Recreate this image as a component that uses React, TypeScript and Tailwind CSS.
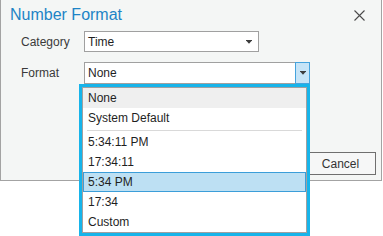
import { useState } from 'react';

const items = ['None', 'System Default', '-', '5:34:11 PM', '17:34:11', '5:34 PM', '17:34', 'Custom'];

const Arrow = () => (
    <svg width="6" height="4" viewBox="0 0 6 4" className="shrink-0">
        <rect x="0" y="0" width="6" height="1" fill="#3c3c3c" />
        <polygon points="0.5,1 5.5,1 3,3.8" fill="#3c3c3c" />
    </svg>
);

const App = () => {
    const [selected] = useState('5:34 PM');

    return (
        <div
            className="relative w-[383px] h-[236px] bg-white text-[12px] text-[#333]"
            style={{ fontFamily: '"Liberation Sans", Arial, sans-serif' }}
        >
            <div className="flex flex-col w-[382px] h-[181px] bg-[#f4f6f5] border-l border-r border-b border-[#a3a3a3]">
                {/* title bar */}
                <div className="flex items-start justify-between h-[31px]">
                    <div className="pl-[9px] pt-[5px] text-[16px] leading-[20px] text-[#1d84c6]">Number Format</div>
                    <svg width="11" height="11" viewBox="0 0 11 11" className="mt-[10px] mr-[16px]">
                        <path d="M0.5 0.5 L10.5 10.5 M10.5 0.5 L0.5 10.5" stroke="#4a4a4a" strokeWidth="1.1" />
                    </svg>
                </div>

                {/* category */}
                <div className="flex items-center h-[21px]">
                    <div className="w-[83px] pl-[20px] text-[#3a3a3a]">Category</div>
                    <div className="flex items-center justify-between w-[175px] h-[21px] bg-white border border-[#a0a0a0] pl-[3px] pr-[6px] text-[#1f1f1f]">
                        <span>Time</span>
                        <Arrow />
                    </div>
                </div>

                {/* format */}
                <div className="flex items-center h-[22px] mt-[10px]">
                    <div className="w-[83px] pl-[20px] text-[#3a3a3a]">Format</div>
                    <div className="flex w-[226px] h-[22px]">
                        <div className="flex items-center flex-1 bg-white border border-r-0 border-[#a0a0a0] pl-[3px] text-[#1f1f1f]">
                            None
                        </div>
                        <div className="flex items-center justify-center w-[15px] h-full bg-[#c6e4f7] border border-[#45a3dd]">
                            <Arrow />
                        </div>
                    </div>
                </div>

                <div className="flex justify-end mt-[68px] mr-[5px]">
                    <div className="flex items-center justify-center w-[71px] h-[23px] border border-[#6f6f6f] bg-[#f6f7f7] text-[#333]">
                        Cancel
                    </div>
                </div>
            </div>

            {/* open dropdown list */}
            <div className="absolute left-[79px] top-[84px] w-[231px] border-[3px] border-[#17b4ea]">
                <div className="flex flex-col bg-white border border-[#a0a0a0] text-[#1f1f1f]">
                    {items.map((item, i) =>
                        item === '-' ? (
                            <div key={i} className="h-[4px] flex items-center px-[4px]">
                                <div className="h-px w-full bg-[#d9d9d9]" />
                            </div>
                        ) : (
                            <div
                                key={i}
                                className={
                                    item === selected
                                        ? 'h-[20px] flex items-center pl-[4px] bg-[#bde0f3] border border-[#3b9ed9]'
                                        : item === 'None'
                                          ? 'h-[20px] flex items-center pl-[5px] bg-[#efefef]'
                                          : 'h-[20px] flex items-center pl-[5px]'
                                }
                            >
                                {item}
                            </div>
                        )
                    )}
                </div>
            </div>
        </div>
    );
};

export default App;
